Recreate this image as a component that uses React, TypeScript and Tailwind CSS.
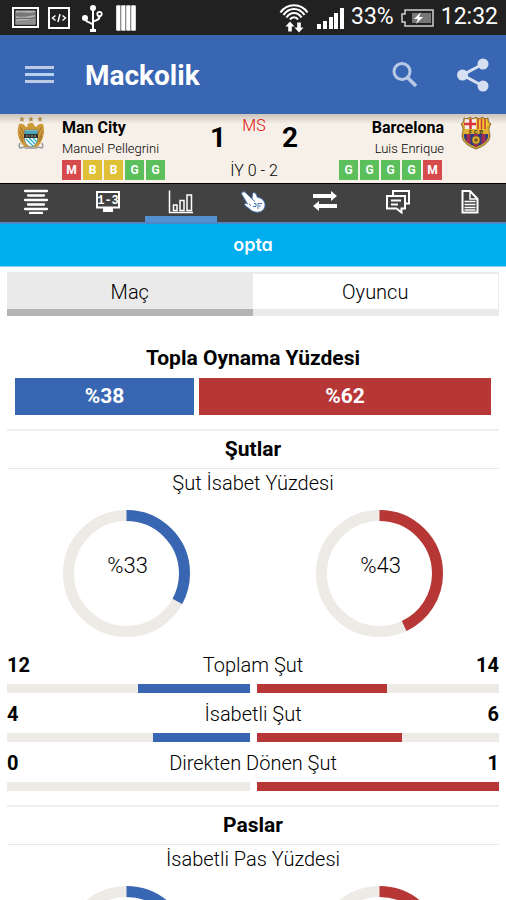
import React, { useState } from 'react';

type Side = 'home' | 'away';

interface Stat {
  label: string;
  home: number;
  away: number;
}

interface Section {
  title: string;
  subtitle: string;
  home: number;
  away: number;
  stats: Stat[];
}

const sections: Section[] = [
  {
    title: 'Şutlar',
    subtitle: 'Şut İsabet Yüzdesi',
    home: 33,
    away: 43,
    stats: [
      { label: 'Toplam Şut', home: 12, away: 14 },
      { label: 'İsabetli Şut', home: 4, away: 6 },
      { label: 'Direkten Dönen Şut', home: 0, away: 1 },
    ],
  },
  {
    title: 'Paslar',
    subtitle: 'İsabetli Pas Yüzdesi',
    home: 78,
    away: 87,
    stats: [],
  },
];

const formColors: Record<string, string> = {
  M: 'bg-[#d64b4e]',
  B: 'bg-[#dfc037]',
  G: 'bg-[#5bbf5b]',
};

/* Status bar */

function StatusBar() {
  return (
    <div className="flex h-[35px] shrink-0 items-center justify-between bg-[#212121] pr-2 pl-3 text-white">
      <div className="flex items-center gap-2">
        <svg width="27" height="21" viewBox="0 0 27 21">
          <rect x="1" y="1" width="25" height="19" fill="#222" stroke="#fff" strokeWidth="2" />
          <rect x="3.5" y="3.5" width="20" height="14" fill="#b5b5b5" />
          <path d="M3.5 6c6-2 13 1 20-1v3c-7 1-13 3-20 1z" fill="#777" />
          <path d="M3.5 17.5v-3c5-3 9 1 20-4v7z" fill="#8e8e8e" />
          <path d="M3.5 12c7-2 14 1 20-2" stroke="#555" fill="none" />
        </svg>
        <svg width="24" height="24" viewBox="0 0 24 24" fill="none" stroke="#fff">
          <rect x="2" y="2" width="20" height="20" strokeWidth="2" />
          <path d="M8.500 9.500L5.500 12l3 2.500M15.500 9.500l3 2.500-3 2.500M13 8l-2 8" strokeWidth="1.500" />
        </svg>
        <svg width="28" height="28" viewBox="0 0 28 28" fill="none" stroke="#fff" strokeWidth="2">
          <path d="M14 4v22M14 21c-1-3-8-2-8-7M14 18c1-2 7-1 6.500-6" />
          <circle cx="14" cy="4" r="3" fill="#fff" stroke="none" />
          <circle cx="6" cy="14" r="3" fill="#fff" stroke="none" />
          <circle cx="20.500" cy="10" r="2.200" strokeWidth="1.800" />
          <path d="M11 26.500h6" strokeWidth="3" />
        </svg>
        <svg width="22" height="26" viewBox="4 0 22 26">
          <path d="M5 .5h20v25H5z" fill="#d9d9d9" />
          <path d="M6 .5h3v25H6zM11 .5h3v25h-3zM16 .5h3v25h-3zM21 .5h3v25h-3z" fill="#fff" />
          <path d="M9.500 1v24M14.500 1v24M19.500 1v24" stroke="#8d8d8d" />
        </svg>
      </div>
      <div className="flex items-center gap-[7px] text-[23px]">
        <svg width="32" height="30" viewBox="0 0 32 30" fill="none" stroke="#fff" strokeWidth="2.200">
          <path d="M2.500 9.500C9-.2 23-.2 29.500 9.500M5.500 12C11 4 21 4 26.500 12M8.500 14.500c4-6 11-6 15 0M12 16.500c2-3 6-3 8 0" />
          <path d="M12 18.500l4.500 5h-2.700v5h-3.600v-5H7.500zM21 29.500l-4.500-5h2.700v-5h3.600v5h2.700z" fill="#fff" stroke="none" />
        </svg>
        <svg width="27" height="22" viewBox="0 0 27 22" fill="#fff">
          <path d="M0 17h4v5H0zM6 14h4v8H6zM12 10h4v12h-4zM17 6h4v16h-4zM23 1h4v21h-4z" />
        </svg>
        <span>33%</span>
        <svg width="33" height="18" viewBox="0 0 33 18" fill="none">
          <path d="M4 1h28v16H4v-4H1V5h3z" stroke="#d0d0d0" strokeWidth="1.500" />
          <path d="M11 4h19v10H11z" fill="#777" />
          <path d="M20 3l-7 7h4l-2 5 7-7h-4z" fill="#fff" />
        </svg>
        <span>12:32</span>
      </div>
    </div>
  );
}

/* App bar */

function AppBar() {
  return (
    <header className="flex h-[79px] shrink-0 items-center bg-[#3966b2] pr-4 pl-6 text-white">
      <button type="button" aria-label="Menü">
        <svg width="30" height="18" viewBox="0 0 30 18">
          <path d="M1 0h29v3H1zM1 14h29v3H1z" fill="#bccae3" />
          <path d="M1 7h29v3H1z" fill="#b6d4f2" />
        </svg>
      </button>
      <h1 className="ml-[31px] flex-1 pt-0.5 text-[28px] font-bold">Mackolik</h1>
      <button type="button" aria-label="Ara">
        <svg width="26" height="26" viewBox="0 0 26 26" fill="none" stroke="#b9c9e5" strokeWidth="3">
          <circle cx="10" cy="9.500" r="8" />
          <path d="M15.500 15.500l8.500 8.500" strokeWidth="3.500" />
        </svg>
      </button>
      <button type="button" aria-label="Paylaş" className="ml-[38px]">
        <svg width="34" height="34" viewBox="0 0 34 34" fill="#d7e0f0">
          <path d="M27 6L6.500 17 27 28" fill="none" stroke="#d7e0f0" strokeWidth="3" />
          <circle cx="27" cy="6" r="5.500" />
          <circle cx="6.500" cy="17" r="5.500" />
          <circle cx="27" cy="28" r="5.500" />
        </svg>
      </button>
    </header>
  );
}

/* Scoreboard */

function CityCrest() {
  return (
    <svg width="30" height="34" viewBox="0 0 30 34" className="shrink-0">
      <path
        d="M6 0l.8 2.200H9L7.200 3.600l.7 2.200L6 4.500 4.100 5.800l.7-2.200L3 2.200h2.200zM15 0l.8 2.200H18l-1.800 1.400.7 2.200L15 4.500l-1.900 1.300.7-2.200L12 2.200h2.200zM24 0l.8 2.200H27l-1.800 1.400.7 2.200L24 4.500l-1.900 1.300.7-2.200L21 2.200h2.200z"
        fill="#a8843c"
      />
      <path
        d="M13 7.500c2-1.500 4.500-1 5 1.500l2 2c2-3 5-4 7-3 2 6 1 13-3 20l-3 3H9l-3-3C1 21 1 14 3 8c3-1 5 0 7 3l2-1-1-2z"
        fill="#cf9b3a"
      />
      <path d="M4.500 11l4 8M3.500 15l4 8M4 20l3 6M25.500 11l-4 8M27 15l-4 8M26 20l-3 6" stroke="#8b6427" strokeWidth=".8" />
      <path d="M4 27c-1 2-1 4 0 5l5-1M26 27c1 2 1 4 0 5l-5-1M9 32h12" stroke="#999" strokeWidth="1.500" fill="none" />
      <path d="M8.500 14h13v9c0 4-3 7-6.500 8-3.500-1-6.500-4-6.500-8z" fill="#fff" stroke="#56716f" strokeWidth=".7" />
      <path d="M9 14.500h12v4H9z" fill="#49a6bb" />
      <path d="M10 23l7 7M13 22l6 6M17 22l4 4" stroke="#38b4cc" strokeWidth="1.500" />
      <path d="M8 18h14v4H8z" fill="#293338" />
      <path d="M10 20h2M13 20h1M15 20h2M18 20h2" stroke="#c3a35b" />
    </svg>
  );
}

function BarcaCrest() {
  return (
    <svg width="32" height="34" viewBox="0 0 32 34" className="shrink-0">
      <path
        d="M4 2c2 1 4 1 6-1 2 2 4 2 6 0 2 2 4 2 6 0 2 2 4 2 6 1 0 3 1 5 3 6-3 4-2 7-1 11 0 7-6 11-14 14C8 30 2 26 2 19 3 15 4 12 1 8c2-1 3-3 3-6z"
        fill="#d5a62b"
        stroke="#6d5021"
        strokeWidth=".8"
      />
      <path d="M5 3c4 1 8 0 11 0v10H5c0-3 0-4-2-5 2-1 2-3 2-5z" fill="#f5eeee" />
      <path d="M10.500 3v10M4 8h12" stroke="#d83438" strokeWidth="2.500" />
      <path d="M16 3c4 1 8 0 11 0 0 2 0 4 2 5-2 2-2 3-2 5H16z" fill="#f3c934" />
      <path d="M18 3v10M21.500 3v10M25 3v10" stroke="#c93a32" strokeWidth="1.500" />
      <path d="M4 18h24c1 7-5 10-12 13C9 28 3 25 4 18z" fill="#263f86" />
      <path d="M6.500 18h4v10.500l-4-3zM14 18h4v12l-2 1-2-1zM21.500 18h4v7l-4 3.500z" fill="#a62b50" />
      <path d="M3.500 13h25v5h-25z" fill="#e0b132" />
      <text x="16" y="17.500" textAnchor="middle" fontSize="6" fontWeight="700" fill="#4b3c18">F C B</text>
      <circle cx="16" cy="24" r="4" fill="#e0ae32" stroke="#775922" strokeWidth=".7" />
      <path d="M16 22l2 1.500-.8 2.200h-2.400L14 23.500z" fill="#775922" />
    </svg>
  );
}

function FormStrip({ results }: { results: string[] }) {
  return (
    <div className="flex">
      {results.map((r, i) => (
        <span
          key={i}
          className={`mr-0.5 flex h-5 w-[19px] items-center justify-center text-xs font-bold text-white ${formColors[r]}`}
        >
          {r}
        </span>
      ))}
    </div>
  );
}

function Scoreboard() {
  return (
    <section className="flex h-[70px] shrink-0 border-b border-black bg-[#f7f0e8] bg-linear-to-b from-[#cbc4bc] to-[#f7f0e8] to-[10px]">
      <div className="flex flex-1 gap-4 pt-0.5 pl-4">
        <CityCrest />
        <div className="flex flex-col items-start">
          <h2 className="text-base leading-6 font-bold">Man City</h2>
          <p className="mb-0.5 text-[13px] leading-[18px] font-light">Manuel Pellegrini</p>
          <FormStrip results={['M', 'B', 'B', 'G', 'G']} />
        </div>
      </div>
      <div className="flex w-[88px] flex-col items-center justify-between pb-0.5">
        <div className="flex w-full justify-between">
          <span className="pt-1 text-[28px] leading-10 font-bold">1</span>
          <span className="text-base leading-6 font-light text-[#e00b0b]">MS</span>
          <span className="pt-1 text-[28px] leading-10 font-bold">2</span>
        </div>
        <span className="text-base leading-5 font-light">İY 0 - 2</span>
      </div>
      <div className="flex flex-1 justify-end gap-4 pt-0.5 pr-3.5">
        <div className="flex flex-col items-end">
          <h2 className="text-base leading-6 font-bold">Barcelona</h2>
          <p className="mb-0.5 text-[13px] leading-[18px] font-light">Luis Enrique</p>
          <FormStrip results={['G', 'G', 'G', 'G', 'M']} />
        </div>
        <BarcaCrest />
      </div>
    </section>
  );
}

/* Icon tabs */

const tabs: { name: string; icon: React.ReactNode }[] = [
  {
    name: 'Özet',
    icon: <path d="M2 3h22M5 7.500h16M2 12h22M5 16.500h16M2 21h22M7 25h12" strokeWidth="2.300" strokeLinecap="round" />,
  },
  {
    name: 'Skor',
    icon: (
      <>
        <path d="M2 4h22v15.500H2z" />
        <path d="M8 22h10" strokeWidth="4" />
        <text
          x="13"
          y="15.500"
          textAnchor="middle"
          fontSize="12"
          fontWeight="700"
          fontFamily="Liberation Mono, monospace"
          fill="#fff"
          stroke="none"
        >
          1-3
        </text>
      </>
    ),
  },
  {
    name: 'İstatistik',
    icon: <path d="M1.500 2.500V24.500H25M5.500 17h3.500v5.500H5.500zM12 12.500h4v10h-4zM19 7h4.500v15.500H19z" strokeWidth="1.500" />,
  },
  {
    name: 'İddaa',
    icon: (
      <>
        <path
          d="M2 4.500c1.500-1.500 3-.5 4 .5l6 6c.5-1.500 0-3 .5-5 .8-2 2.500-1.500 3.500 0l1.500 3.500c4 0 8 4 7.500 8-.5 5-5 7.500-9.500 6.500-3-.5-5-2-6.500-3.500l-4-3c-1-1 0-2.500 1.500-2l1 .5L2.500 7.500c-1-1.200-1.200-2.200-.5-3z"
          fill="#fff"
          stroke="#4776b5"
          strokeWidth="1"
        />
        <path d="M12 11l3 2.500M9 16l2 1.500M13 18.500h3v-3h-2m4 5.500v-5.500h4M19 18h2" stroke="#4776b5" strokeWidth="1" />
      </>
    ),
  },
  {
    name: 'Değişiklik',
    icon: <path d="M1 6h18V3l6 5-6 5v-3H1zM25 16H7v-3l-6 5 6 5v-3h18z" fill="#fff" stroke="none" />,
  },
  {
    name: 'Yorumlar',
    icon: (
      <>
        <path d="M8 7V3h16v12.500h-3.500" />
        <path d="M2 8h18v12.500h-3.500v4l-5-4H2z" />
        <path d="M6 12.500h10M6 16.500h7" />
      </>
    ),
  },
  {
    name: 'Haber',
    icon: (
      <>
        <path d="M5.500 3h7.500l7.500 8v13.500h-15z" />
        <path d="M13 3v8h7.500M7.500 13.500h11M7.500 16.500h11M7.500 19.500h11M7.500 22h11" strokeWidth="1.500" />
      </>
    ),
  },
];

function IconTabs() {
  const [active, setActive] = useState(2);

  return (
    <nav className="flex h-10 shrink-0 border-b-2 border-[#4c86c6] bg-[#424242]">
      {tabs.map((tab, i) => (
        <button
          key={tab.name}
          type="button"
          aria-label={tab.name}
          onClick={() => setActive(i)}
          className={`flex flex-1 justify-center border-b-6 pt-1 ${i === active ? 'border-[#5290cf]' : 'border-transparent'}`}
        >
          <svg width="26" height="26" viewBox="0 0 26 26" fill="none" stroke="#fff" strokeWidth="2">
            {tab.icon}
          </svg>
        </button>
      ))}
    </nav>
  );
}

/* Statistics */

function Ring({ value, side }: { value: number; side: Side }) {
  return (
    <div className="grid flex-1 place-items-center *:col-start-1 *:row-start-1">
      <svg width="127" height="127" viewBox="0 0 127 127" fill="none" strokeWidth="11">
        <circle cx="63.500" cy="63.500" r="58" stroke="#eeebe6" />
        <circle
          cx="63.500"
          cy="63.500"
          r="58"
          stroke={side === 'home' ? '#3966b2' : '#b73636'}
          pathLength={100}
          strokeDasharray={`${value} 100`}
          transform="rotate(-90 63.500 63.500)"
        />
      </svg>
      <span className="pb-4 pl-0.5 text-[22px] font-light">%{value}</span>
    </div>
  );
}

function StatRow({ stat }: { stat: Stat }) {
  const total = stat.home + stat.away;
  return (
    <div className="mb-1">
      <div className="flex h-9 items-center justify-between pb-0.5 text-xl">
        <span className="flex-1 font-bold">{stat.home}</span>
        <span className="font-light">{stat.label}</span>
        <span className="flex-1 text-right font-bold">{stat.away}</span>
      </div>
      <div className="flex h-[9px] gap-[7px]">
        <div className="flex flex-1 justify-end bg-[#eeebe6]">
          <div className="bg-[#3966b2]" style={{ width: `${(stat.home / total) * 100}%` }} />
        </div>
        <div className="flex flex-1 bg-[#eeebe6]">
          <div className="bg-[#b73636]" style={{ width: `${(stat.away / total) * 100}%` }} />
        </div>
      </div>
    </div>
  );
}

function StatSection({ section }: { section: Section }) {
  return (
    <section className="pb-2.5">
      <h3 className="flex h-10 items-center justify-center border-t-2 border-b border-t-[#f0eeea] border-b-[#ece8e2] text-[21px] font-bold">
        {section.title}
      </h3>
      <p className="text-center text-xl leading-7 font-light">{section.subtitle}</p>
      <div className="-mx-[7px] flex pt-[13px] pb-[11px]">
        <Ring value={section.home} side="home" />
        <Ring value={section.away} side="away" />
      </div>
      {section.stats.map(stat => (
        <StatRow key={stat.label} stat={stat} />
      ))}
    </section>
  );
}

export default function App() {
  const [view, setView] = useState<'match' | 'player'>('match');

  return (
    <div className="flex h-screen flex-col overflow-hidden bg-white font-[Roboto,sans-serif] text-black">
      <StatusBar />
      <AppBar />
      <Scoreboard />
      <IconTabs />
      <div className="flex h-[43px] shrink-0 items-center justify-center border-b border-[#8fd0f3] bg-[#00adef] font-[Inter,sans-serif] text-lg font-semibold text-white [font-feature-settings:'cv11']">
        opta
      </div>

      <main className="min-h-0 flex-1 overflow-y-auto px-[7px] pt-[5px] [scrollbar-width:none]">
        <div className="flex h-11 text-xl font-light">
          <button
            type="button"
            onClick={() => setView('match')}
            className={`flex-1 border-t-2 border-b-7 ${view === 'match' ? 'border-t-[#eaeaea] border-b-[#b4b4b4] bg-[#eaeaea]' : 'border-[#eaeaea]'}`}
          >
            Maç
          </button>
          <button
            type="button"
            onClick={() => setView('player')}
            className={`flex-1 border-t-2 border-r border-b-7 ${view === 'player' ? 'border-[#eaeaea] border-b-[#b4b4b4] bg-[#eaeaea]' : 'border-[#eaeaea]'}`}
          >
            Oyuncu
          </button>
        </div>

        <section className="px-2 pt-7 pb-3.5 text-[21px] font-bold">
          <h3 className="mb-1.5 text-center leading-7">Topla Oynama Yüzdesi</h3>
          <div className="flex h-[37px] gap-[5px] text-white *:flex *:basis-0 *:items-center *:justify-center">
            <div className="bg-[#3966b2]" style={{ flexGrow: 38 }}>%38</div>
            <div className="bg-[#b73636]" style={{ flexGrow: 62 }}>%62</div>
          </div>
        </section>

        {sections.map(section => (
          <StatSection key={section.title} section={section} />
        ))}
      </main>
    </div>
  );
}
